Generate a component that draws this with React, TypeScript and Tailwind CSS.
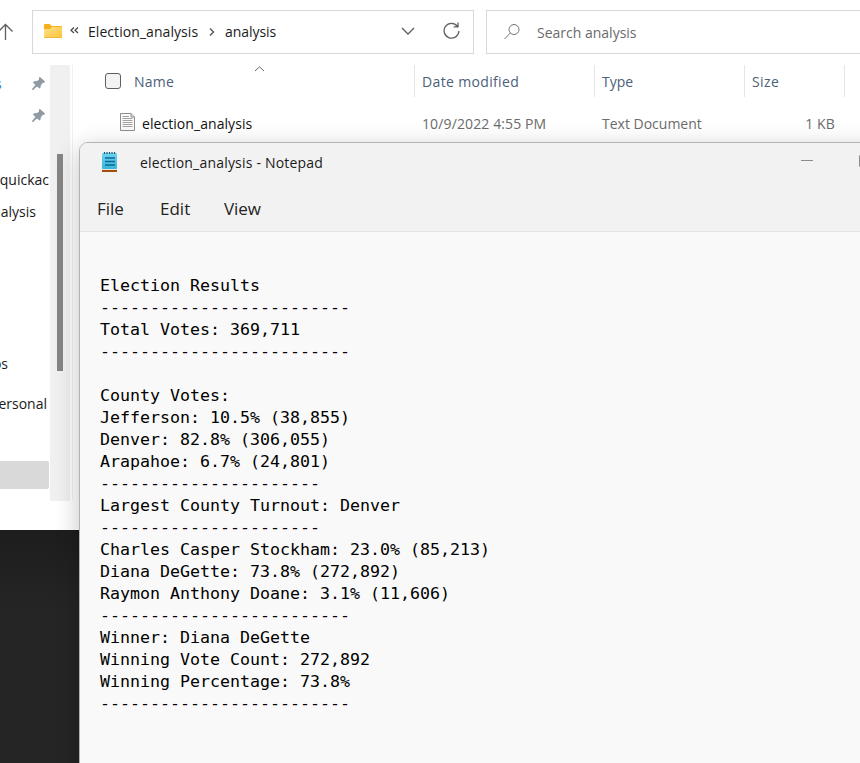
import React from "react";

const SANS = "font-['Open_Sans','Noto_Sans',sans-serif]";

function Pin() {
  return (
    <svg width="13" height="13" viewBox="0 0 13 13" fill="#8f9aa3">
      <path d="M8 0 L13 4.4 L12.6 5.6 L10.8 6 L9 8 L8.4 10.8 L7.6 11.6 L5 9.4 L1 13 L0 12.8 L0 12 L3.4 8 L1 5.4 L2 4.2 L5 4 L7 2.4 L7 0.6 Z" />
    </svg>
  );
}

function Folder() {
  return (
    <svg width="18" height="15" viewBox="0 0 18 15">
      <defs>
        <linearGradient id="folder" x1="0" y1="0" x2="1" y2="1">
          <stop offset="0" stopColor="#ffe08a" />
          <stop offset="1" stopColor="#fcc53a" />
        </linearGradient>
      </defs>
      <path d="M0 1Q0 0 1 0H5.5L7.8 2H17Q18 2 18 3V8H0Z" fill="#f5b01c" />
      <path d="M0 5H6L8 3H17.2Q18 3 18 4V13Q18 14 17 14H1Q0 14 0 13Z" fill="url(#folder)" />
      <path d="M0.3 13.5H17.7" stroke="#eeb73c" strokeWidth="1" />
    </svg>
  );
}

function TextFile() {
  return (
    <svg className="block" width="15" height="19" viewBox="0 0 15 19">
      <path d="M0.5 0.5H11L14.5 4V17.5H0.5Z" fill="#fafafa" stroke="#8e8e8e" />
      <path d="M11 0.5V4H14.5" fill="none" stroke="#8e8e8e" />
      <path d="M2.5 3.5H9M2.5 5.5H12.5M2.5 7.5H12.5M2.5 9.5H12.5M2.5 11.5H12.5M2.5 13.5H12.5" stroke="#a2a2a2" />
    </svg>
  );
}

function NotepadIcon() {
  return (
    <svg width="15" height="20" viewBox="0 0 15 20">
      <defs>
        <linearGradient id="pad" x1="0" y1="0" x2="0" y2="1">
          <stop offset="0" stopColor="#70d5ee" />
          <stop offset="1" stopColor="#39b4da" />
        </linearGradient>
      </defs>
      <rect x="0" y="18" width="15" height="2" fill="#a3500f" />
      <rect x="0" y="17" width="15" height="1" fill="#e9e4df" />
      <rect x="0" y="1" width="15" height="16" rx="1" fill="url(#pad)" />
      <path d="M2.5 0V2M5 0V2M7.5 0V2M10 0V2M12.5 0V2" stroke="#155a7c" strokeWidth="1.2" />
      <path d="M3 6H13M3 9.5H13M3 13H13" stroke="#086a98" strokeWidth="1.5" />
    </svg>
  );
}

const REPORT = `Election Results
-------------------------
Total Votes: 369,711
-------------------------

County Votes:
Jefferson: 10.5% (38,855)
Denver: 82.8% (306,055)
Arapahoe: 6.7% (24,801)
----------------------
Largest County Turnout: Denver
----------------------
Charles Casper Stockham: 23.0% (85,213)
Diana DeGette: 73.8% (272,892)
Raymon Anthony Doane: 3.1% (11,606)
-------------------------
Winner: Diana DeGette
Winning Vote Count: 272,892
Winning Percentage: 73.8%
-------------------------`;

function AddressBar() {
  return (
    <div className="flex h-[65px] pt-[10px]">
      <div className="w-8 shrink-0 overflow-hidden pt-[13px]">
        <svg width="14" height="18" viewBox="0 0 14 18" fill="none" stroke="#5d5d5d" strokeWidth="1.3">
          <path d="M5.5 17V1.5M-1 8L5.5 1.5L12.5 8.5" />
        </svg>
      </div>
      <div className="flex h-11 w-[442px] shrink-0 items-center border border-[#d9d9d9] pl-[11px] text-[#1b1b1b]">
        <span className="-mt-[2px]">
          <Folder />
        </span>
        <svg className="-mt-[3px] ml-2" width="9" height="7" viewBox="0 0 9 7" fill="none" stroke="#444" strokeWidth="1.2">
          <path d="M4 0.5L1 3.2L4 6M8 0.5L5 3.2L8 6" />
        </svg>
        <span className="-mt-[2px] ml-[9px] w-[110px] text-[14px] tracking-[0.06px]">Election_analysis</span>
        <svg className="-mt-[1px] ml-[11px]" width="6" height="8" viewBox="0 0 6 8" fill="none" stroke="#555" strokeWidth="1.4">
          <path d="M1 0.5L4.5 4L1 7.5" />
        </svg>
        <span className="-mt-[2px] ml-[10px] w-[176px] text-[14px] tracking-[-0.04px]">analysis</span>
        <svg className="-mt-[2px]" width="14" height="8" viewBox="0 0 14 8" fill="none" stroke="#5d5d5d" strokeWidth="1.3">
          <path d="M1 1L7 7L13 1" />
        </svg>
        <svg className="-mt-[2px] ml-[28px]" width="17" height="18" viewBox="0 0 17 18" fill="none" stroke="#606060" strokeWidth="1.3">
          <path d="M14.4 4.3A7.4 7.4 0 1 0 15.9 9M15 0.5V4.8H10.7" />
        </svg>
      </div>
      <div className="ml-3 flex h-11 w-[400px] shrink-0 items-center border border-[#d9d9d9] pl-[17px]">
        <svg className="-mt-[1px]" width="16" height="16" viewBox="0 0 16 16" fill="none" stroke="#747474" strokeWidth="1">
          <circle cx="10" cy="5.5" r="5" />
          <path d="M6.4 9L0.5 15" />
        </svg>
        <span className="ml-[17px] text-[14px] text-[#6b6b6b]">Search analysis</span>
      </div>
    </div>
  );
}

function Sidebar() {
  return (
    <div className="flex h-[465px] w-[79px] shrink-0 text-[14px] text-[#191919]">
      <div className="flex w-[50px] flex-col overflow-hidden">
        <div className="flex h-8 items-center justify-between pr-[5px] pt-[4px]">
          <span className="-ml-[5px] text-[#1683d8]">s</span>
          <Pin />
        </div>
        <div className="flex h-8 items-center justify-end pr-[5px] pt-[4px]">
          <Pin />
        </div>
        <div className="mt-[34px] flex h-8 items-center justify-end pr-[1px]">quickac</div>
        <div className="flex h-8 items-center justify-end pr-[14px]">nalysis</div>
        <div className="mt-[120px] flex h-8 items-center justify-end pr-[42px]">os</div>
        <div className="mt-2 flex h-8 items-center justify-end pr-[3px]">ersonal</div>
        <div className="mt-[42px] h-7 w-[49px] rounded-r-[2px] bg-[#d9d9d9]" />
      </div>
      <div className="h-[436px] w-5 bg-[#f0f0f0] pl-[7px] pt-[89px]">
        <div className="h-[217px] w-[6px] bg-[#858585]" />
      </div>
      <div className="ml-[2px] h-[436px] w-px bg-[#f0f0f0]" />
    </div>
  );
}

function FileList() {
  return (
    <div className="flex-1 text-[14px]">
      <div className="flex h-8 items-center text-[#4c607a]">
        <div className="flex h-8 w-[336px] shrink-0 items-center border-r border-[#e5e5e5] pl-[26px]">
          <div className="h-4 w-4 rounded-[3px] border border-[#5f5f5f] bg-[#f3f3f3]" />
          <span className="ml-[13px] w-[120px] tracking-[0.2px]">Name</span>
          <svg className="-mt-[25px]" width="11" height="6" viewBox="0 0 11 6" fill="none" stroke="#666">
            <path d="M1 5L5.5 0.8L10 5" />
          </svg>
        </div>
        <div className="flex h-8 w-[180px] shrink-0 items-center border-r border-[#e5e5e5] pl-[7px] tracking-[0.35px]">
          Date modified
        </div>
        <div className="flex h-8 w-[150px] shrink-0 items-center border-r border-[#e5e5e5] pl-[7px]">Type</div>
        <div className="flex h-8 w-[100px] shrink-0 items-center border-r border-[#e5e5e5] pl-[7px] tracking-[0.4px]">Size</div>
      </div>
      <div className="mt-[10px] flex h-8 items-center text-[#6b6b6b]">
        <div className="flex w-[343px] shrink-0 items-center pl-[41px]">
          <span className="-mt-[1px]">
            <TextFile />
          </span>
          <span className="ml-[7px] tracking-[0.06px] text-[#111]">election_analysis</span>
        </div>
        <span className="w-[180px] shrink-0 tracking-[0.12px]">10/9/2022 4:55 PM</span>
        <span className="w-[150px] shrink-0">Text Document</span>
        <span className="w-[83px] shrink-0 text-right tracking-[0.15px]">1 KB</span>
      </div>
    </div>
  );
}

function Notepad() {
  return (
    <div className="absolute left-[79px] top-[142px] h-[640px] w-[900px] overflow-hidden rounded-tl-[9px] border border-[#b3b3b3] bg-[#f9f9f9] shadow-[0_6px_24px_rgba(0,0,0,0.24)]">
      <div className="h-[89px] border-b border-[#e4e4e4] bg-[#f2f2f2]">
        <div className="flex h-[38px] items-center pl-[22px] text-[#1b1b1b]">
          <NotepadIcon />
          <span className="ml-[23px] w-[661px] text-[14px] tracking-[0.2px]">election_analysis - Notepad</span>
          <div className="-mt-[4px] h-px w-3 bg-[#8d8d8d]" />
          <div className="-mt-[2px] ml-[46px] h-[12px] w-[12px] rounded-[1px] border border-[#8d8d8d]" />
        </div>
        <div className="flex h-[50px] items-center pl-[17px] pt-[5px] text-[17px] text-[#222]">
          <span className="w-[63px]">File</span>
          <span className="w-[64px]">Edit</span>
          <span className="tracking-[-0.1px]">View</span>
        </div>
      </div>
      <pre className="ml-5 mt-[43px] font-['DejaVu_Sans_Mono',monospace] text-[16.61px] leading-[22px] text-black">{REPORT}</pre>
    </div>
  );
}

export default function App() {
  return (
    <div className={`relative h-[763px] w-[860px] overflow-hidden bg-[#252525] ${SANS}`}>
      <div className="h-[530px] bg-white">
        <AddressBar />
        <div className="flex">
          <Sidebar />
          <FileList />
        </div>
      </div>
      <div className="h-20 bg-linear-to-b from-[#1d1d1d] to-[#252525]" />
      <Notepad />
    </div>
  );
}
